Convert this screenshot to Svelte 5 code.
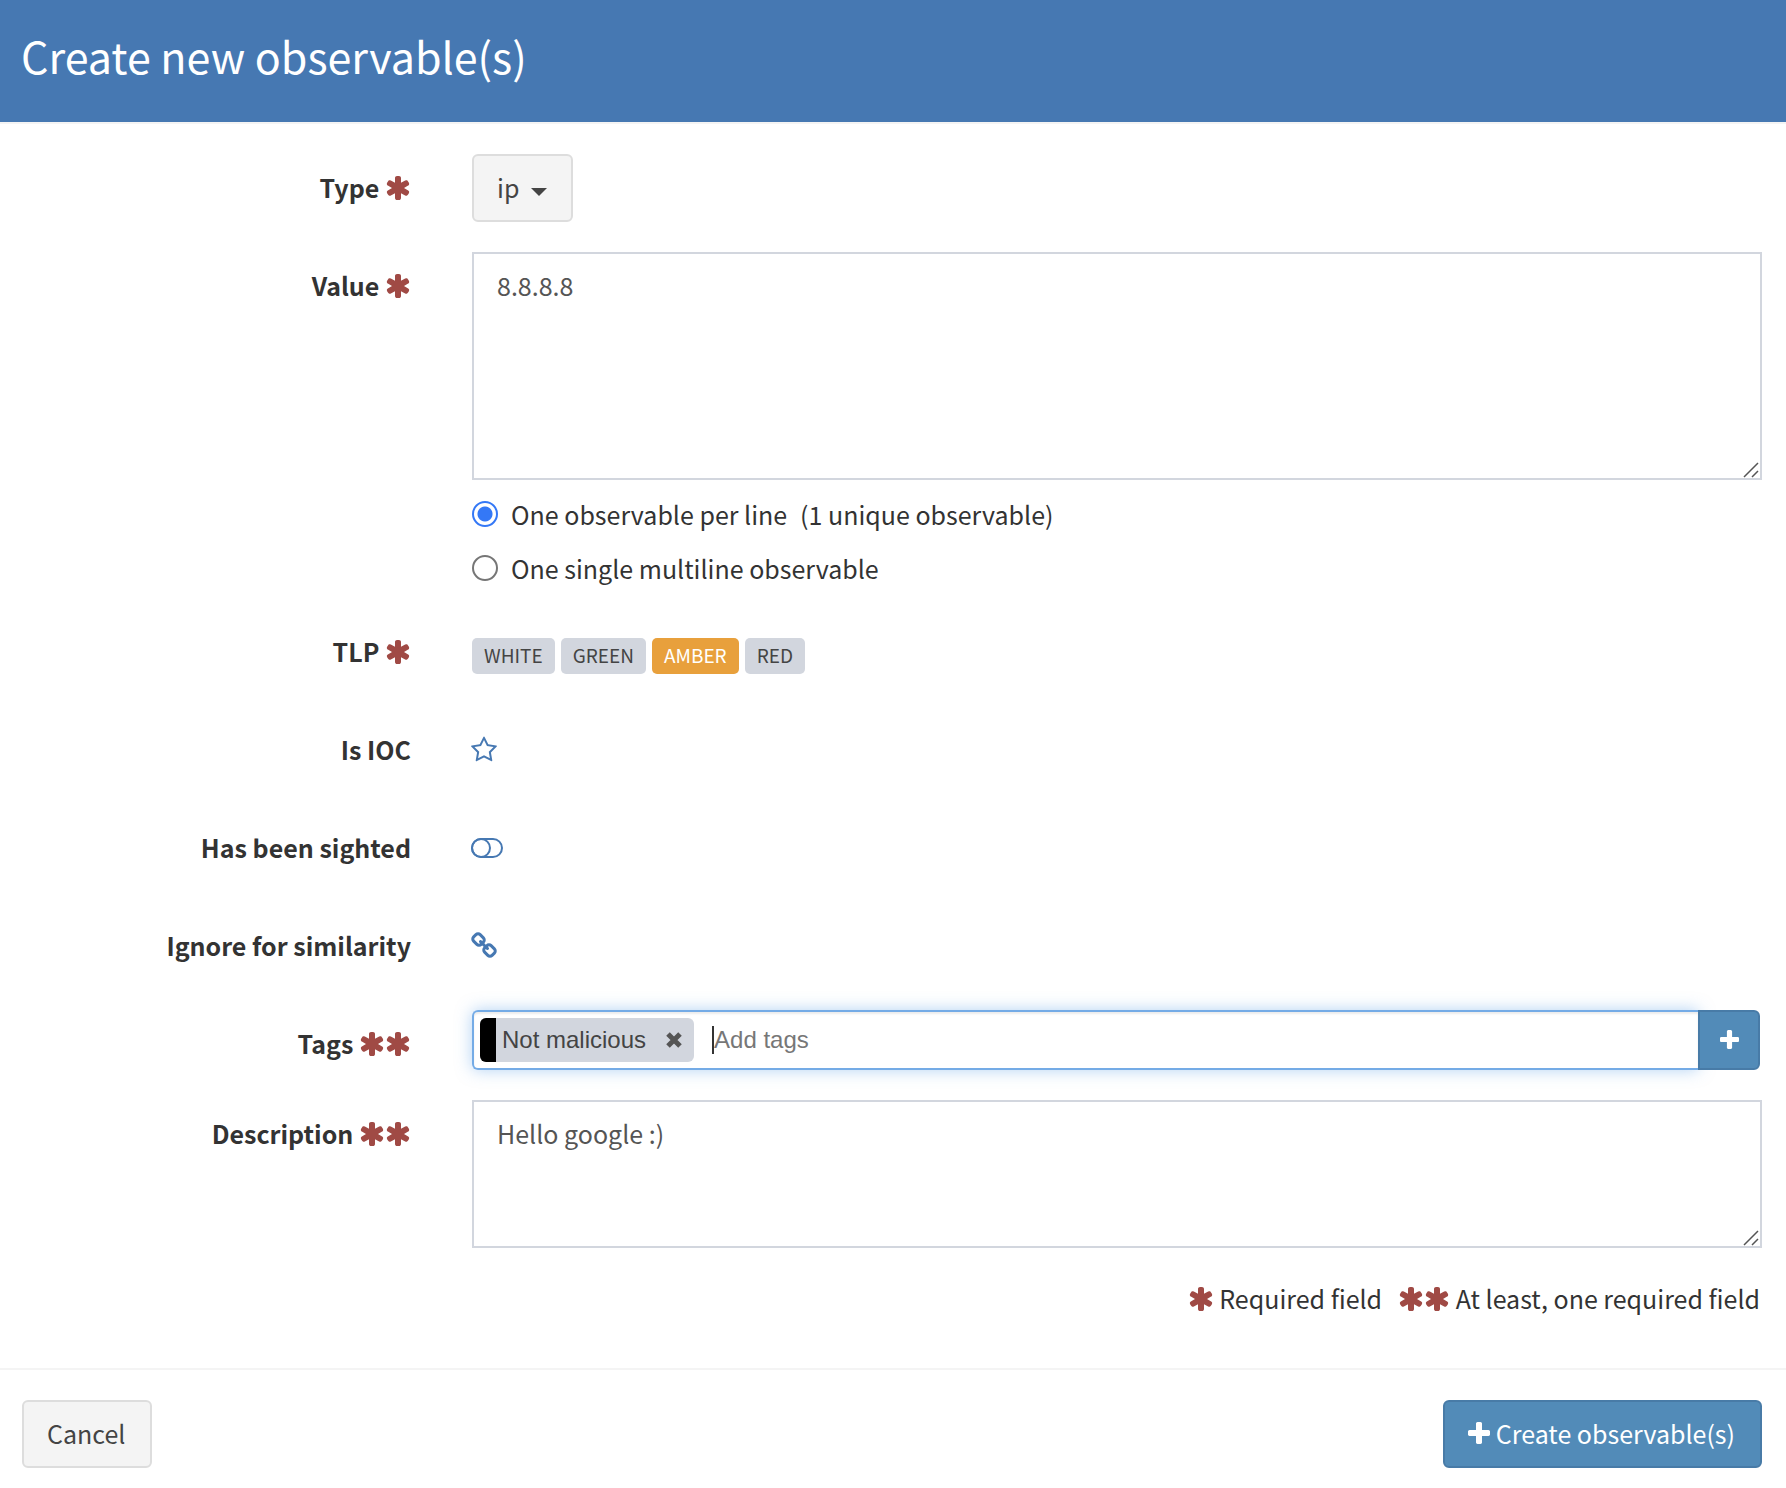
<script lang="ts">
	type Tag = { name: string; color: string };

	const tlpLevels = ['WHITE', 'GREEN', 'AMBER', 'RED'];

	let dataType = $state('ip');
	let value = $state('8.8.8.8');
	let mode = $state('lines');
	let tlp = $state('AMBER');
	let ioc = $state(false);
	let sighted = $state(false);
	let ignoreSimilarity = $state(false);
	let tags = $state<Tag[]>([{ name: 'Not malicious', color: '#000000' }]);
	let newTag = $state('');
	let description = $state('Hello google :)');

	let count = $derived(
		new Set(
			value
				.split('\n')
				.map((line) => line.trim())
				.filter((line) => line)
		).size
	);

	function addTag() {
		if (newTag.trim()) {
			tags.push({ name: newTag.trim(), color: '#000000' });
			newTag = '';
		}
	}

	function removeTag(index: number) {
		tags.splice(index, 1);
	}

	function handleTagKeydown(e: KeyboardEvent) {
		if (e.key === 'Enter') {
			e.preventDefault();
			addTag();
		}
	}
</script>

{#snippet asterisk()}
	<svg class="asterisk" viewBox="64 0 1664 1792" aria-hidden="true">
		<path d="M1546 1050q46 26 59.5 77.5t-12.5 97.5l-64 110q-26 46-77.5 59.5t-97.5-12.5l-266-153v307q0 52-38 90t-90 38h-128q-52 0-90-38t-38-90v-307l-266 153q-46 26-97.5 12.5t-77.5-59.5l-64-110q-26-46-12.5-97.5t59.5-77.5l266-154-266-154q-46-26-59.5-77.5t12.5-97.5l64-110q26-46 77.5-59.5t97.5 12.5l266 153v-307q0-52 38-90t90-38h128q52 0 90 38t38 90v307l266-153q46-26 97.5-12.5t77.5 59.5l64 110q26 46 12.5 97.5t-59.5 77.5l-266 154z" />
	</svg>
{/snippet}

{#snippet plus()}
	<svg class="plus" viewBox="192 128 1408 1408" aria-hidden="true">
		<path d="M1600 736v192q0 40-28 68t-68 28h-416v416q0 40-28 68t-68 28h-192q-40 0-68-28t-28-68v-416h-416q-40 0-68-28t-28-68v-192q0-40 28-68t68-28h416v-416q0-40 28-68t68-28h192q40 0 68 28t28 68v416h416q40 0 68 28t28 68z" />
	</svg>
{/snippet}

{#snippet grip()}
	<svg class="grip" viewBox="0 0 16 16" aria-hidden="true">
		<path d="M1 15L15 1M9 15L15 9" />
	</svg>
{/snippet}

<form class="modal" onsubmit={(e) => e.preventDefault()}>
	<header class="modal-header">
		<h1>Create new observable(s)</h1>
	</header>

	<div class="modal-body">
		<div class="form-row">
			<label class="control-label" for="data-type">Type {@render asterisk()}</label>
			<div class="dropdown">
				<select id="data-type" bind:value={dataType}>
					<option value="ip">ip</option>
				</select>
				<svg class="caret" viewBox="0 0 16 8" aria-hidden="true"><path d="M0 0h16l-8 8z" /></svg>
			</div>
		</div>

		<div class="form-row">
			<label class="control-label" for="value">Value {@render asterisk()}</label>
			<div>
				<div class="textarea-wrap">
					<textarea id="value" class="value" bind:value></textarea>
					{@render grip()}
				</div>
				<div class="radios">
					<label>
						<input type="radio" name="mode" value="lines" bind:group={mode} />
						<span>One observable per line</span>
						<span>({count} unique observable{count === 1 ? '' : 's'})</span>
					</label>
					<label>
						<input type="radio" name="mode" value="multiline" bind:group={mode} />
						<span>One single multiline observable</span>
					</label>
				</div>
			</div>
		</div>

		<div class="form-row">
			<span class="control-label" id="tlp-label">TLP {@render asterisk()}</span>
			<div class="tlp" role="group" aria-labelledby="tlp-label">
				{#each tlpLevels as level (level)}
					<button
						type="button"
						class="tlp-level {level.toLowerCase()}"
						class:active={tlp === level}
						aria-pressed={tlp === level}
						onclick={() => (tlp = level)}
					>
						{level}
					</button>
				{/each}
			</div>
		</div>

		<div class="form-row">
			<label class="control-label" for="ioc">Is IOC</label>
			<button type="button" id="ioc" class="toggle" aria-pressed={ioc} onclick={() => (ioc = !ioc)}>
				<svg width="26" height="28" viewBox="64 0 1664 1792" aria-hidden="true">
					<path d="M1201 1004l306-297-422-62-189-382-189 382-422 62 306 297-73 421 378-199 377 199zm527-357q0 22-26 48l-363 354 86 500q1 7 1 20 0 50-41 50-19 0-40-12l-449-236-449 236q-22 12-40 12-21 0-31.5-14.5t-10.5-35.5q0-6 2-20l86-500-364-354q-25-27-25-48 0-37 56-46l502-73 225-455q19-41 49-41t49 41l225 455 502 73q56 9 56 46z" />
				</svg>
			</button>
		</div>

		<div class="form-row">
			<label class="control-label" for="sighted">Has been sighted</label>
			<button type="button" id="sighted" class="toggle" aria-pressed={sighted} onclick={() => (sighted = !sighted)}>
				<svg class="outline" width="32" height="28" viewBox="0 0 2048 1792" aria-hidden="true">
					<rect x="64" y="320" width="1920" height="1152" rx="576" />
					<circle cx={sighted ? 1408 : 640} cy="896" r="576" />
				</svg>
			</button>
		</div>

		<div class="form-row">
			<label class="control-label" for="similarity">Ignore for similarity</label>
			<button
				type="button"
				id="similarity"
				class="toggle"
				aria-pressed={ignoreSimilarity}
				onclick={() => (ignoreSimilarity = !ignoreSimilarity)}
			>
				<svg width="26" height="28" viewBox="64 0 1664 1792" aria-hidden="true">
					<path d="M1520 1216q0-40-28-68l-208-208q-28-28-68-28-42 0-72 32 3 3 19 18.5t21.5 21.5 15 19 13 25.5 3.5 27.5q0 40-28 68t-68 28q-15 0-27.5-3.5t-25.5-13-19-15-21.5-21.5-18.5-19q-33 31-33 73 0 40 28 68l206 207q27 27 68 27 40 0 68-26l147-146q28-28 28-67zm-703-705q0-40-28-68l-206-207q-28-28-68-28-39 0-68 27l-147 146q-28 28-28 67 0 40 28 68l208 208q27 27 68 27 42 0 72-31-3-3-19-18.5t-21.5-21.5-15-19-13-25.5-3.5-27.5q0-40 28-68t68-28q15 0 27.5 3.5t25.5 13 19 15 21.5 21.5 18.5 19q33-31 33-73zm895 705q0 120-85 203l-147 146q-83 83-203 83-121 0-204-85l-206-207q-83-83-83-203 0-123 88-209l-88-88q-86 88-208 88-120 0-204-84l-208-208q-84-84-84-204t85-203l147-146q83-83 203-83 121 0 204 85l206 207q83 83 83 203 0 123-88 209l88 88q86-88 208-88 120 0 204 84l208 208q84 84 84 204z" />
				</svg>
			</button>
		</div>

		<div class="form-row">
			<label class="control-label" for="tags">Tags {@render asterisk()}{@render asterisk()}</label>
			<div class="tag-group">
				<div class="tag-box">
					{#each tags as tag, i (tag.name)}
						<span class="tag">
							<span class="tag-color" style="background: {tag.color}"></span>
							{tag.name}
							<button type="button" class="tag-remove" aria-label="Remove {tag.name}" onclick={() => removeTag(i)}>
								<svg viewBox="0 0 18 18" aria-hidden="true"><path d="M3 3l12 12M15 3L3 15" /></svg>
							</button>
						</span>
					{/each}
					<input id="tags" type="text" placeholder="Add tags" bind:value={newTag} onkeydown={handleTagKeydown} />
				</div>
				<button type="button" class="tag-add" aria-label="Add tag" onclick={addTag}>{@render plus()}</button>
			</div>
		</div>

		<div class="form-row">
			<label class="control-label" for="description">Description {@render asterisk()}{@render asterisk()}</label>
			<div class="textarea-wrap">
				<textarea id="description" class="description" bind:value={description}></textarea>
				{@render grip()}
			</div>
		</div>

		<div class="legend">
			<span>{@render asterisk()} Required field</span>
			<span>{@render asterisk()}{@render asterisk()} At least, one required field</span>
		</div>
	</div>

	<footer class="modal-footer">
		<button type="button" class="btn">Cancel</button>
		<button type="submit" class="btn primary">{@render plus()}Create observable(s)</button>
	</footer>
</form>

<style>
	:global(body) {
		margin: 0;
		background: #fff;
	}

	.modal,
	.modal button,
	.modal select,
	.modal textarea {
		font-family: 'Noto Sans CJK JP', 'Open Sans', sans-serif;
		font-size: 25px;
		line-height: 40px;
	}

	.modal {
		color: #333;
	}

	.modal * {
		box-sizing: border-box;
	}

	.modal-header {
		padding: 24px 21px 36px;
		background: #4678b2;
		border-bottom: 2px solid #f4f4f4;
	}

	h1 {
		margin: 0;
		font-size: 43px;
		font-weight: 400;
		line-height: 62px;
		color: #fff;
	}

	.modal-body {
		display: flex;
		flex-direction: column;
		gap: 30px;
		padding: 30px 24px 50px;
	}

	.form-row {
		display: grid;
		grid-template-columns: 3fr 10fr;
		column-gap: 61px;
		align-items: start;
		justify-items: start;
		min-height: 68px;
	}

	.form-row > div:not(.dropdown) {
		width: 100%;
	}

	.form-row:has(.tag-group) {
		min-height: 60px;
	}

	.control-label {
		justify-self: end;
		padding-top: 13px;
		font-weight: 700;
		text-align: right;
	}

	.asterisk {
		width: 26px;
		height: 28px;
		fill: #a04a45;
		vertical-align: -4px;
	}

	.dropdown {
		display: grid;
		align-items: center;
	}

	.dropdown > * {
		grid-area: 1 / 1;
	}

	.dropdown select {
		appearance: none;
		height: 68px;
		padding: 0 51px 2px 23px;
		background: #f4f4f4;
		border: 2px solid #ddd;
		border-radius: 6px;
		color: #444;
		cursor: pointer;
	}

	.caret {
		justify-self: end;
		width: 16px;
		height: 8px;
		margin: 7px 26px 0 0;
		fill: #444;
		pointer-events: none;
	}

	.textarea-wrap {
		position: relative;
	}

	.modal textarea {
		display: block;
		width: 100%;
		margin: 0;
		padding: 11px 23px;
		background: #fff;
		border: 2px solid #d2d6de;
		border-radius: 0;
		color: #555;
		outline: none;
		resize: vertical;
	}

	textarea::-webkit-resizer {
		display: none;
	}

	.value {
		height: 228px;
	}

	.description {
		height: 148px;
	}

	.grip {
		position: absolute;
		right: 3px;
		bottom: 2px;
		width: 16px;
		height: 16px;
		fill: none;
		stroke: #555;
		stroke-width: 1.5;
		pointer-events: none;
	}

	.radios {
		display: flex;
		flex-direction: column;
		gap: 14px;
		padding-top: 14px;
	}

	.radios label {
		display: flex;
		align-items: center;
		gap: 13px;
	}

	.radios input {
		appearance: none;
		width: 26px;
		height: 26px;
		margin: 0;
		border: 2px solid #767676;
		border-radius: 50%;
		background: #fff;
	}

	.radios input:checked {
		border-color: #3478f6;
		background: radial-gradient(circle, #3478f6 7px, #fff 8px);
	}

	.tlp {
		display: flex;
		gap: 6px;
		padding-top: 20px;
	}

	.modal .tlp-level {
		height: 36px;
		padding: 0 12px 2px;
		background: #d2d6de;
		border: none;
		border-radius: 5px;
		color: #444;
		font-size: 19px;
		line-height: 32px;
		cursor: pointer;
	}

	.modal .tlp-level.active {
		color: #fff;
	}

	.modal .tlp-level.active.white {
		background: #fff;
		color: #444;
	}

	.modal .tlp-level.active.green {
		background: #00a65a;
	}

	.modal .tlp-level.active.amber {
		background: #e8a03c;
	}

	.modal .tlp-level.active.red {
		background: #dd4b39;
	}

	.toggle {
		display: flex;
		margin-left: -1px;
		padding: 20px 0;
		background: none;
		border: none;
		cursor: pointer;
	}

	.toggle svg {
		fill: #4678b2;
	}

	.toggle .outline {
		fill: none;
		stroke: #4678b2;
		stroke-width: 128;
	}

	.tag-group,
	.legend {
		display: flex;
		padding-right: 2px;
	}

	.tag-box {
		display: flex;
		flex: 1;
		align-items: center;
		gap: 6px;
		height: 60px;
		padding: 0 6px;
		border: 2px solid #74abe6;
		border-right: none;
		border-radius: 6px 0 0 6px;
		box-shadow:
			inset 0 2px 2px rgba(0, 0, 0, 0.08),
			0 0 16px rgba(102, 165, 233, 0.5);
	}

	.tag {
		display: flex;
		align-items: center;
		gap: 6px;
		height: 44px;
		padding-right: 11px;
		overflow: hidden;
		background: #d2d6de;
		border-radius: 6px;
		color: #444;
	}

	.tag,
	.tag-box input {
		font-family: 'Liberation Sans', Arial, sans-serif;
		font-size: 24px;
		line-height: 28px;
	}

	.tag-color {
		width: 16px;
		height: 44px;
	}

	.tag-remove {
		display: flex;
		margin-left: 13px;
		padding: 0;
		background: none;
		border: none;
		cursor: pointer;
	}

	.tag-remove svg {
		width: 18px;
		height: 18px;
		fill: none;
		stroke: #555;
		stroke-width: 5;
	}

	.tag-box input {
		flex: 1;
		min-width: 0;
		height: 28px;
		margin-left: 12px;
		padding: 0;
		background: none;
		border: none;
		border-left: 2px solid #333;
		color: #555;
		outline: none;
	}

	.tag-box input::placeholder {
		color: #777;
	}

	.tag-add {
		display: flex;
		align-items: center;
		justify-content: center;
		width: 62px;
		height: 60px;
		padding: 0 0 2px;
		background: #528bb8;
		border: 2px solid #487ba7;
		border-radius: 0 6px 6px 0;
		cursor: pointer;
	}

	.plus {
		width: 22px;
		height: 22px;
		fill: #fff;
	}

	.tag-add .plus {
		width: 19px;
		height: 19px;
	}

	.legend {
		justify-content: flex-end;
		gap: 16px;
	}

	.modal-footer {
		display: flex;
		justify-content: space-between;
		padding: 30px 24px 20px 22px;
		border-top: 2px solid #f4f4f4;
	}

	.btn {
		height: 68px;
		padding: 0 25px 2px 23px;
		background: #f4f4f4;
		border: 2px solid #ddd;
		border-radius: 6px;
		color: #444;
		cursor: pointer;
	}

	.btn.primary {
		display: flex;
		align-items: center;
		gap: 6px;
		background: #528bb8;
		border-color: #487ba7;
		color: #fff;
	}
</style>
